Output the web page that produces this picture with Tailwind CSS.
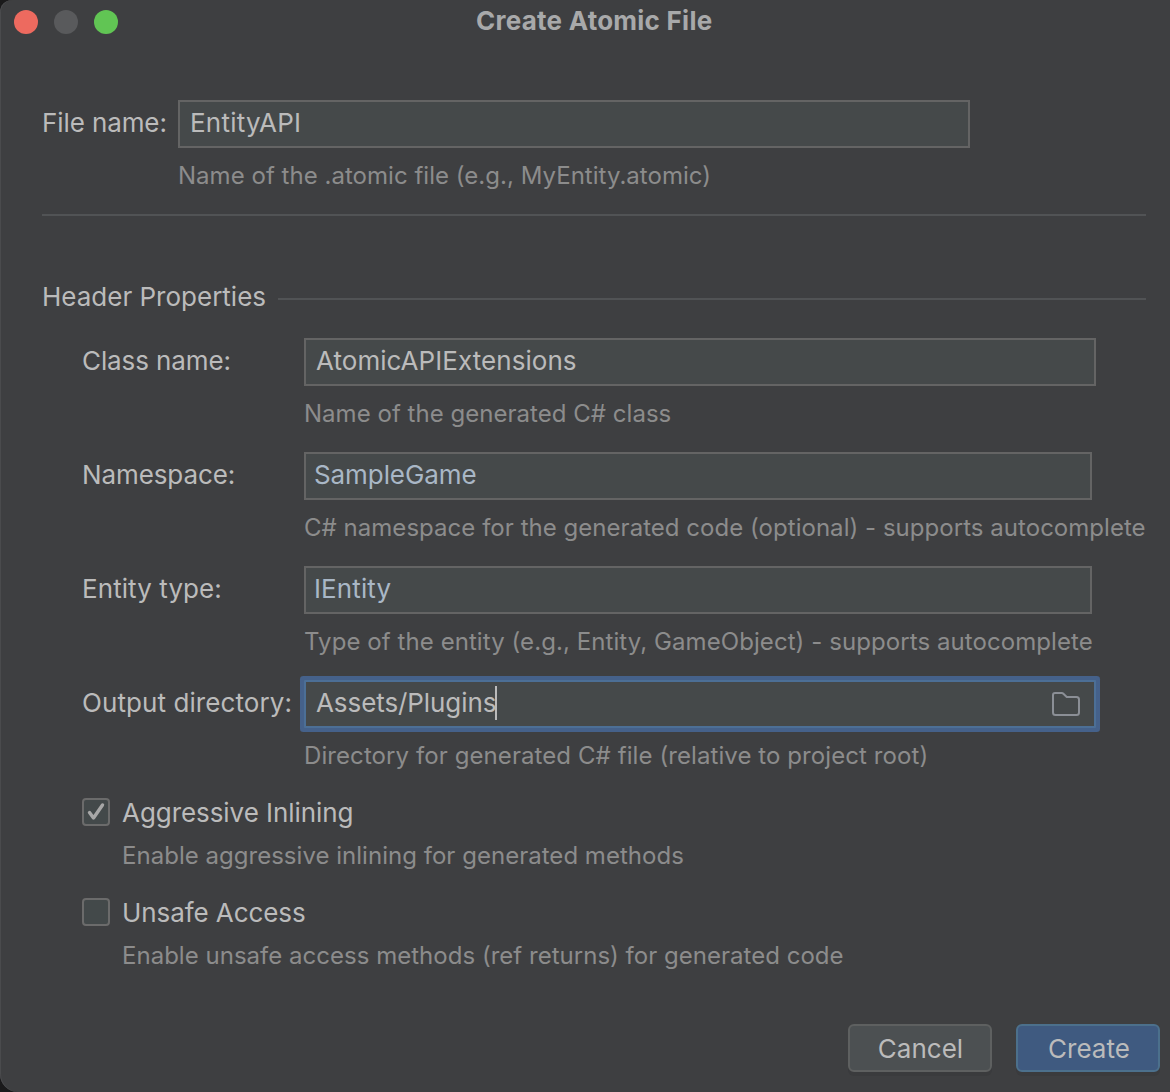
<!DOCTYPE html>
<html lang="en">
<head>
<meta charset="utf-8">
<title>Create Atomic File</title>
<script src="https://cdn.jsdelivr.net/npm/@tailwindcss/browser@4"></script>
</head>
<body class="bg-[#1a1a1b] overflow-hidden">
<main class="relative w-[1170px] h-[1092px] overflow-hidden rounded-tl-[12px] rounded-bl-[18px] bg-[#3e3f41] shadow-[inset_1px_0_0_#4a4b4d] font-['Inter',sans-serif] text-[26px] leading-[32px] text-[#bbbbbb] whitespace-nowrap">
  <header class="flex h-11 items-center pl-[14px]">
    <div class="flex gap-4">
      <span class="size-6 rounded-full bg-[#ed6a5f]"></span>
      <span class="size-6 rounded-full bg-[#595a5c]"></span>
      <span class="size-6 rounded-full bg-[#61c554]"></span>
    </div>
    <h1 class="ml-[358px] pb-[2px] font-bold tracking-[0.25px] text-[#a8a9aa]"><span>Create Atomic File</span></h1>
  </header>

  <section class="mt-14 ml-[42px] mr-6">
    <div class="flex h-12">
      <label class="w-[136px] pt-[7px] tracking-[-0.1px]"><span>File name:</span></label>
      <div class="w-[792px] border-2 border-[#646464] bg-[#45494a] pl-[10px] pt-[5px] tracking-[0.22px]"><span>EntityAPI</span></div>
    </div>
    <p class="ml-[136px] mt-3 text-2xl leading-[32px] tracking-[0.03px] text-[#8c8c8c]"><span>Name of the .atomic file (e.g., MyEntity.atomic)</span></p>
    <div class="mt-[22px] h-[2px] bg-[#515355]"></div>
  </section>

  <section class="mt-[65px] ml-[42px] mr-6">
    <div class="flex h-8 items-center">
      <h2 class="w-[236px]"><span>Header Properties</span></h2>
      <div class="mt-[3px] h-[2px] grow bg-[#515355]"></div>
    </div>
    <div class="ml-10 mt-[25px] flex flex-col gap-[22px]">
      <div>
        <div class="flex h-12">
          <label class="w-[222px] pt-[7px] tracking-[-0.1px]"><span>Class name:</span></label>
          <div class="w-[792px] border-2 border-[#646464] bg-[#45494a] pl-[10px] pt-[5px] tracking-[0.05px]"><span>AtomicAPIExtensions</span></div>
        </div>
        <p class="ml-[222px] mt-3 text-2xl leading-[32px] tracking-[0.03px] text-[#8c8c8c]"><span>Name of the generated C# class</span></p>
      </div>
      <div>
        <div class="flex h-12">
          <label class="w-[222px] pt-[7px] tracking-[-0.1px]"><span>Namespace:</span></label>
          <div class="w-[788px] border-2 border-[#646464] bg-[#45494a] pl-2 pt-[5px] tracking-[-0.08px] text-[#a9b7c6]"><span>SampleGame</span></div>
        </div>
        <p class="ml-[222px] mt-3 text-2xl leading-[32px] tracking-[0.035px] text-[#8c8c8c]"><span>C# namespace for the generated code (optional) - supports autocomplete</span></p>
      </div>
      <div>
        <div class="flex h-12">
          <label class="w-[222px] pt-[7px] tracking-[0.08px]"><span>Entity type:</span></label>
          <div class="w-[788px] border-2 border-[#646464] bg-[#45494a] pl-2 pt-[5px] tracking-[0.1px] text-[#a9b7c6]"><span>IEntity</span></div>
        </div>
        <p class="ml-[222px] mt-3 text-2xl leading-[32px] tracking-[0.075px] text-[#8c8c8c]"><span>Type of the entity (e.g., Entity, GameObject) - supports autocomplete</span></p>
      </div>
      <div>
        <div class="flex h-12">
          <label class="w-[222px] pt-[7px] tracking-[0.08px]"><span>Output directory:</span></label>
          <div class="flex w-[792px] justify-between border-2 border-[#4c6f96] bg-[#45494a] pl-[10px] pr-[14px] ring-4 ring-[#45618a] rounded-[1px]">
            <div class="flex pt-[4px]"><span class="pt-px tracking-[-0.08px]">Assets/Plugins</span><i class="-ml-px h-[34px] w-[2px] bg-[#bbbbbb]"></i></div>
            <svg class="mt-[8px]" width="28" height="28" viewBox="0 0 28 28" fill="none" stroke="#8b8f96" stroke-width="2"><path d="M1 5Q1 3 3 3H9.8Q10.7 3 11.4 3.7L14.7 7H24.500Q27 7 27 9.500V22.500Q27 25 24.500 25H3.500Q1 25 1 22.500Z"/></svg>
          </div>
        </div>
        <p class="ml-[222px] mt-3 text-2xl leading-[32px] tracking-[0.085px] text-[#8c8c8c]"><span>Directory for generated C# file (relative to project root)</span></p>
      </div>
    </div>

    <div class="ml-10 mt-[25px] flex flex-col gap-[25px]">
      <div>
        <div class="flex h-8 items-center gap-3">
          <span class="mb-[2px] size-7 rounded-[4px] border-2 border-[#6b6b6b] bg-[#43494a]">
            <svg width="24" height="24" viewBox="0 0 24 24" fill="none" stroke="#a7a7a7" stroke-width="3.400" stroke-linecap="round" stroke-linejoin="round"><path d="M5.500 12.500L9.500 18L18.500 5"/></svg>
          </span>
          <span class="tracking-[-0.06px]">Aggressive Inlining</span>
        </div>
        <p class="ml-10 mt-[11px] text-2xl leading-[32px] tracking-[0.025px] text-[#8c8c8c]"><span>Enable aggressive inlining for generated methods</span></p>
      </div>
      <div>
        <div class="flex h-8 items-center gap-3">
          <span class="mb-[2px] size-7 rounded-[4px] border-2 border-[#6b6b6b] bg-[#43494a]"></span>
          <span class="tracking-[-0.08px]">Unsafe Access</span>
        </div>
        <p class="ml-10 mt-[11px] text-2xl leading-[32px] tracking-[0.02px] text-[#8c8c8c]"><span>Enable unsafe access methods (ref returns) for generated code</span></p>
      </div>
    </div>
  </section>

  <footer class="mt-[52px] mr-[10px] flex justify-end gap-6">
    <button class="h-12 w-36 rounded-[6px] border-2 border-[#5e6060] bg-[#4c5052] pt-[2px] pl-px shadow-[0_4px_0_#3a3b3d]"><span>Cancel</span></button>
    <button class="h-12 w-36 rounded-[6px] border-2 border-[#4c708c] bg-[#3f5a80] pt-[2px] pl-[2px] shadow-[0_4px_0_#3a3b3d]"><span>Create</span></button>
  </footer>
</main>
</body>
</html>
